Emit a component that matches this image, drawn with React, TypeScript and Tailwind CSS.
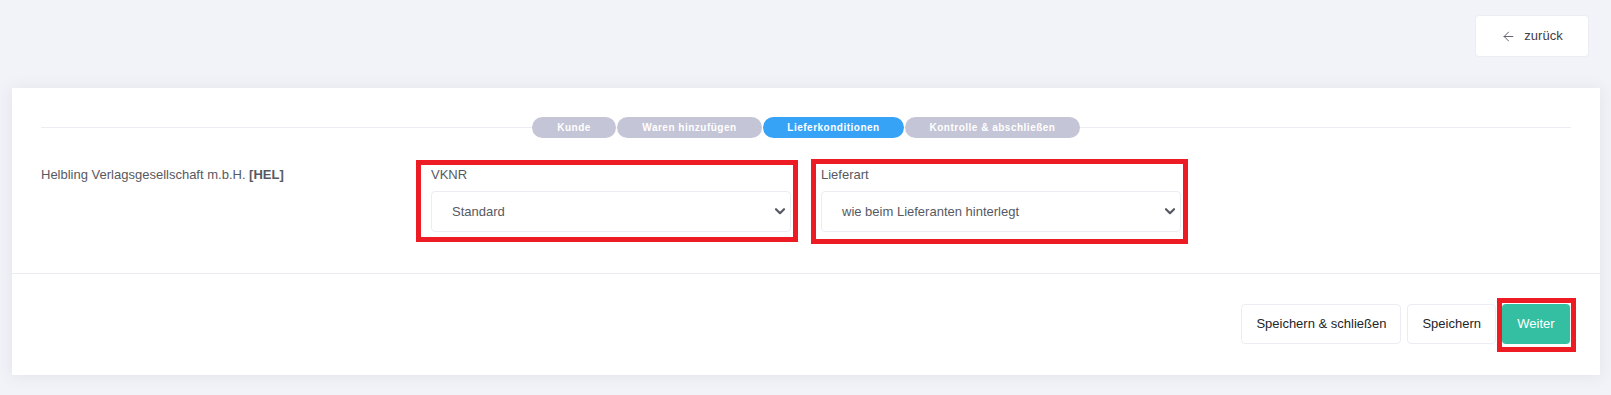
import { ArrowLeft } from "lucide-react";

const steps = [
  { label: "Kunde", width: "w-[84px]", active: false },
  { label: "Waren hinzufügen", width: "w-[145px]", active: false },
  { label: "Lieferkonditionen", width: "w-[141px]", active: true },
  { label: "Kontrolle & abschließen", width: "w-[175px]", active: false },
];

function SelectBox({ value }: { value: string }) {
  return (
    <div className="flex h-[41px] items-center justify-between rounded-[4px] border border-[#ebedf2] bg-white pl-[20px] pr-[4px] text-[13px] text-[#575962]">
      <span>{value}</span>
      <svg width="10" height="7" viewBox="0 0 10 7" fill="none" className="mr-[1px]">
        <path d="M1 1.2 L5 5.2 L9 1.2" stroke="#575962" strokeWidth="2.2" strokeLinecap="round" strokeLinejoin="round" />
      </svg>
    </div>
  );
}

export default function App() {
  return (
    <div className="h-[395px] w-full bg-[#f2f3f8] font-['Liberation_Sans',Arial,sans-serif]">
      <div className="flex justify-end pr-[22px] pt-[15px]">
        <button className="flex h-[42px] w-[114px] items-center justify-center gap-[8px] rounded-[4px] border border-[#ebedf2] bg-white text-[13px] text-[#3f4047]">
          <ArrowLeft className="h-[15px] w-[15px] text-[#575962]" strokeWidth={1.5} />
          <span>zurück</span>
        </button>
      </div>

      <div className="ml-[12px] mr-[11px] mt-[31px] bg-white shadow-[0_1px_15px_1px_rgba(69,65,78,0.08)]">
        <div className="border-b border-[#ebedf2] px-[29px] pb-[41px] pt-[29px]">
          <div className="flex items-center">
            <div className="h-px w-[491px] flex-none bg-[#ebedf2]" />
            <div className="flex flex-none gap-px">
              {steps.map((step) => (
                <div
                  key={step.label}
                  className={`flex h-[21px] flex-none items-center justify-center rounded-full text-[10px] font-bold tracking-[0.5px] text-white ${step.width} ${
                    step.active ? "bg-[#36a3f7]" : "bg-[#c4c5d6]"
                  }`}
                >
                  {step.label}
                </div>
              ))}
            </div>
            <div className="h-px flex-1 bg-[#ebedf2]" />
          </div>

          <div className="mt-[28px] flex items-start text-[13px] text-[#575962]">
            <div className="w-[390px] flex-none leading-[18px]">
              Helbling Verlagsgesellschaft m.b.H. <span className="font-bold">[HEL]</span>
            </div>

            <div className="relative w-[360px] flex-none">
              <div className="pointer-events-none absolute -bottom-[10px] -left-[15px] -right-[7px] -top-[6px] border-[5px] border-[#ed1c24]" />
              <div className="mb-[7px] leading-[18px]">VKNR</div>
              <SelectBox value="Standard" />
            </div>

            <div className="relative ml-[30px] w-[360px] flex-none">
              <div className="pointer-events-none absolute -bottom-[12px] -left-[10px] -right-[7px] -top-[7px] border-[5px] border-[#ed1c24]" />
              <div className="mb-[7px] leading-[18px]">Lieferart</div>
              <SelectBox value="wie beim Lieferanten hinterlegt" />
            </div>
          </div>
        </div>

        <div className="flex justify-end gap-[6px] pb-[31px] pr-[30px] pt-[30px] text-[13px]">
          <button className="h-[40px] rounded-[4px] border border-[#ebedf2] bg-white px-[14px] text-[#212529]">
            Speichern &amp; schließen
          </button>
          <button className="h-[40px] rounded-[4px] border border-[#ebedf2] bg-white px-[14px] text-[#212529]">
            Speichern
          </button>
          <div className="relative">
            <div className="pointer-events-none absolute -bottom-[8px] -left-[5px] -right-[6px] -top-[6px] border-[5px] border-[#ed1c24]" />
            <button className="h-[40px] w-[68px] rounded-[4px] bg-[#34bfa3] text-white">Weiter</button>
          </div>
        </div>
      </div>
    </div>
  );
}
